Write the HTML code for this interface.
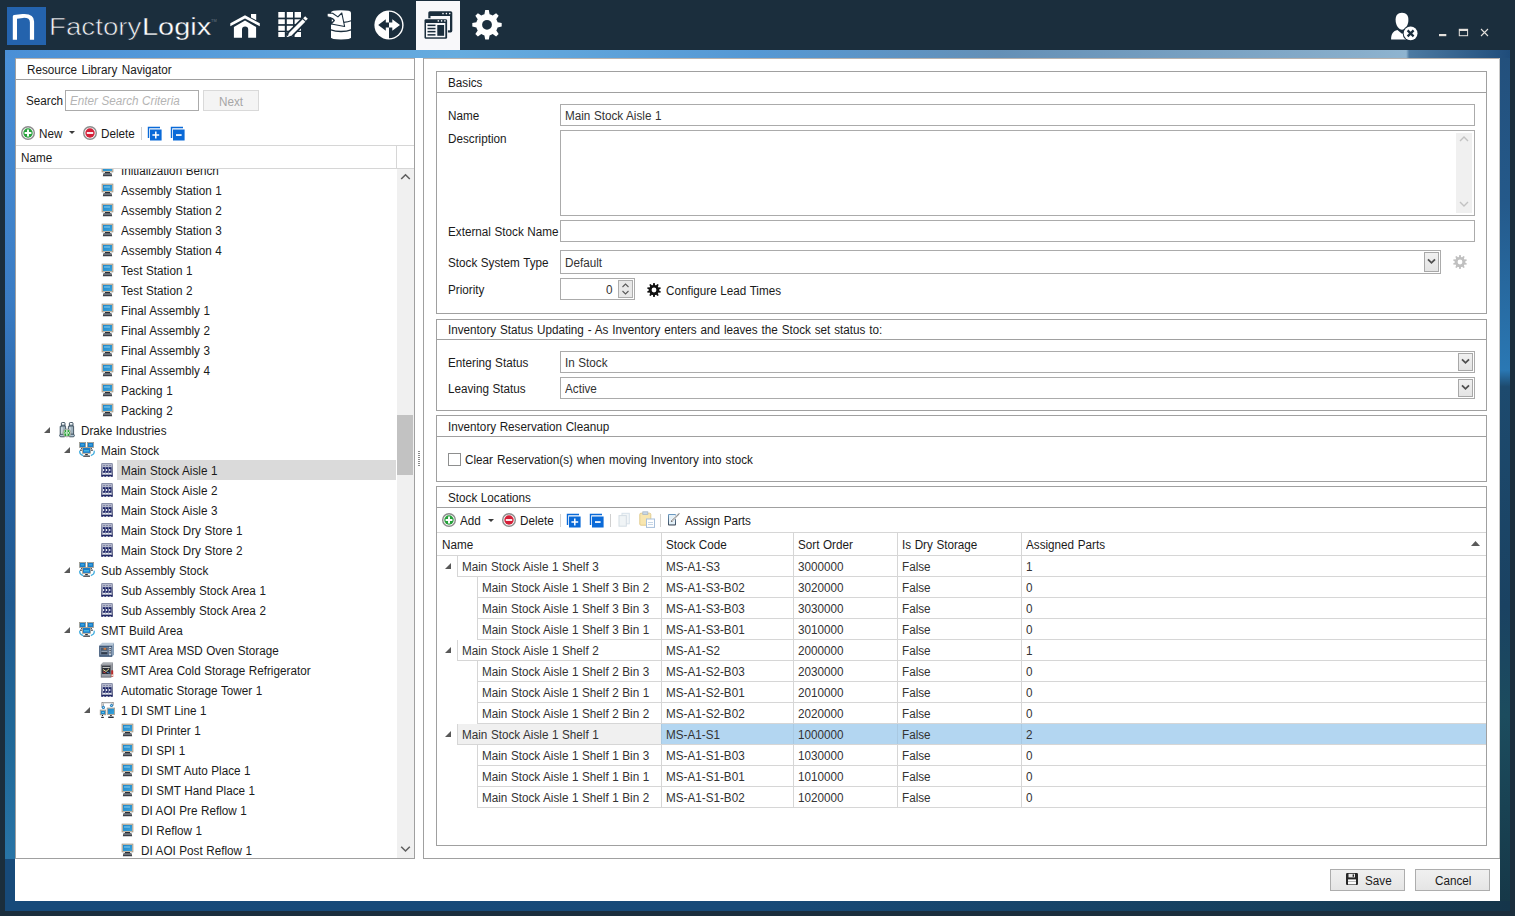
<!DOCTYPE html>
<html><head><meta charset="utf-8">
<style>
*{margin:0;padding:0;box-sizing:border-box}
html,body{width:1515px;height:916px;overflow:hidden;background:#1b2e3d;font-family:"Liberation Sans",sans-serif;font-size:11.7px;color:#1a1a1a}
.a{position:absolute}
.t{position:absolute;white-space:nowrap;line-height:14px;height:14px;word-spacing:0.3px;font-size:12px;transform:scaleX(0.975);transform-origin:0 0}
.hl{position:absolute;height:1px;background:#a0a0a0}
.vl{position:absolute;width:1px;background:#a0a0a0}
.box{position:absolute;border:1px solid #a0a0a0;background:#fff}
.gl{position:absolute;height:1px;background:#d6d6d6}
.gv{position:absolute;width:1px;background:#d6d6d6}
.v{color:#333}
</style></head><body>
<!-- frame -->
<div class="a" style="left:5px;top:50px;width:1505px;height:8px;background:linear-gradient(90deg,#4a8fd6 0%,#66acdf 30%,#5598d4 50%,#6590b6 66%,#88aecb 90%,#8fb4d0 93.1%,#4d7aa2 93.3%,#1f4c7a 100%)"></div>
<div class="a" style="left:5px;top:58px;width:10px;height:801px;background:linear-gradient(180deg,#4a90d8 0%,#3a7cc4 30%,#2460a2 50%,#1f5a90 68%,#1f6898 85%,#2874a6 100%)"></div>
<div class="a" style="left:5px;top:859px;width:10px;height:52px;background:#174a7a"></div>
<div class="a" style="left:1500px;top:58px;width:10px;height:843px;background:linear-gradient(180deg,#23507c 0%,#24598a 17%,#2a78b4 37%,#1d4a6e 39%,#1a4262 65%,#1c4c5e 78%,#163848 100%)"></div>
<div class="a" style="left:5px;top:901px;width:1505px;height:10px;background:linear-gradient(90deg,#174a7a 0%,#184a78 50%,#163f5c 85%,#15354a 100%)"></div>
<div class="a" style="left:15px;top:58px;width:1485px;height:843px;background:#fff"></div>
<div class="a" style="left:15px;top:58px;width:1485px;height:1px;background:#b8b2ae"></div>
<div class="a" style="left:415px;top:58px;width:8px;height:1px;background:#fff;z-index:1"></div>
<!-- title bar -->
<div id="title">
<div class="a" style="left:416px;top:1px;width:44px;height:49px;background:#f8f8fa"></div>
<svg class="a" style="left:0;top:0" width="1515" height="50" viewBox="0 0 1515 50">
 <!-- logo -->
 <rect x="7" y="7" width="39" height="38" fill="#2463ad"/>
 <path d="M12.8 39.7 V16.4 Q12.8 15.3 14 15.1 L22.5 14 Q34.1 13.2 34.1 21.5 V39.7 H29.9 V22.2 Q29.9 17.5 23 17.9 L17 18.7 V39.7 Z" fill="#fff"/>
 <!-- home -->
 <path d="M251 13.9 H256.2 V20.2 L251 17.4 Z" fill="#fff"/>
 <path d="M230.3 23.3 L245 15.2 L259.8 23.3 V26.3 L245 18.6 L230.3 26.3 Z" fill="#fff" stroke="#1b2e3d" stroke-width="0"/>
 <path d="M233.9 27 L245 20.6 L256.1 27 V37.8 H248.2 V29.6 A3.1 3.1 0 0 0 242 29.6 V37.8 H233.9 Z" fill="#fff"/>
 <!-- grid + pencil -->
 <g fill="#fff">
  <rect x="278.3" y="12" width="6.5" height="5.6"/><rect x="286.8" y="12" width="6.2" height="5.6"/><rect x="294.6" y="12" width="6.4" height="5.6"/>
  <rect x="278.3" y="19.3" width="6.5" height="4.8"/><rect x="286.8" y="19.3" width="6.2" height="4.8"/><rect x="294.6" y="19.3" width="6.4" height="4.8"/>
  <rect x="278.3" y="25.8" width="6.5" height="4.9"/><rect x="286.8" y="25.8" width="6.2" height="4.9"/><rect x="294.6" y="25.8" width="6.4" height="4.9"/>
  <rect x="278.3" y="32" width="6.5" height="5"/><rect x="286.8" y="32" width="6.2" height="5"/><rect x="294.6" y="32" width="6.4" height="5"/>
 </g>
 <path d="M288 36.5 L305.5 19" stroke="#1b2e3d" stroke-width="7"/>
 <path d="M290 34.5 L304 20.5" stroke="#fff" stroke-width="3.8"/>
 <path d="M287.6 37 L289 33 L291.5 35.5 Z" fill="#fff"/>
 <path d="M304.5 19.5 L306.5 17.5" stroke="#fff" stroke-width="3.8"/>
 <!-- database -->
 <path d="M331 12.6 Q331 10.3 341 10.3 Q351 10.3 351 12.6 V37.2 Q351 39.4 341 39.4 Q331 39.4 331 37.2 Z" fill="#fff"/>
 <path d="M330 29.6 Q341 33.4 352 29.6" fill="none" stroke="#1b2e3d" stroke-width="1.5"/>
 <path d="M343.5 22.4 Q348 22 352 20.5" fill="none" stroke="#1b2e3d" stroke-width="1.1"/>
 <path d="M330.4 16.4 L334 17.6 L335.2 20.4 L331.6 24.4 L330.4 24.4 Z" fill="#1b2e3d"/>
 <path d="M327.1 13.2 L332.6 13.2 L337.9 16.9 L341.8 13.0 L344.6 26.5 L331.3 24.0 L334.4 20.6 Q333.6 17.8 327.1 16.7 Z" fill="#fff" stroke="#1b2e3d" stroke-width="1.1" stroke-linejoin="round"/>
 <path d="M331.8 19 L333.4 20.5 L331.8 22" fill="#fff"/>
 <!-- transfer -->
 <circle cx="389" cy="25" r="14.6" fill="#fff"/>
 <path d="M389 11.8 A13.2 13.2 0 0 1 389 38.2 Z" fill="#1b2e3d"/>
 <path d="M378.2 25 L385.8 19.2 V22.6 H389 V27.4 H385.8 V30.8 Z" fill="#1b2e3d"/>
 <path d="M400 25 L392.3 19.2 V22.6 H389 V27.4 H392.3 V30.8 Z" fill="#fff"/>
 <!-- windows (active) -->
 <g fill="#1b2e3d">
  <rect x="428.3" y="11.2" width="24" height="21.2" rx="1.6"/>
 </g>
 <rect x="430.5" y="16" width="19.5" height="14.3" fill="#f8f8fa"/>
 <rect x="423.5" y="18.2" width="24.4" height="21.5" rx="1.6" fill="#f8f8fa"/>
 <rect x="424.5" y="19.2" width="22.6" height="19.6" rx="1.4" fill="#1b2e3d"/>
 <rect x="426" y="23" width="19.3" height="14.3" fill="#f8f8fa"/>
 <g fill="#1b2e3d">
  <rect x="427.5" y="24.6" width="8" height="1.5"/><rect x="427.5" y="27.8" width="8" height="1.5"/><rect x="427.5" y="30.9" width="8" height="1.5"/><rect x="427.5" y="34.1" width="8" height="1.5"/>
  <rect x="437.3" y="25" width="6.8" height="10.8"/>
 </g>
 <g fill="#f8f8fa"><circle cx="443" cy="13.6" r=".8"/><circle cx="446.4" cy="13.6" r=".8"/><circle cx="449.7" cy="13.6" r=".8"/>
 <circle cx="438.3" cy="20.9" r=".8"/><circle cx="441.6" cy="20.9" r=".8"/><circle cx="444.9" cy="20.9" r=".8"/></g>
 <!-- gear -->
 <g transform="translate(487,24.8)">
  <path id="gear8" fill="#fff" fill-rule="evenodd" d="M-2.58 -10.59 L-1.80 -14.69 L1.80 -14.69 L2.58 -10.59 A10.9 10.9 0 0 1 5.67 -9.31 L9.12 -11.66 L11.66 -9.12 L9.31 -5.67 A10.9 10.9 0 0 1 10.59 -2.58 L14.69 -1.80 L14.69 1.80 L10.59 2.58 A10.9 10.9 0 0 1 9.31 5.67 L11.66 9.12 L9.12 11.66 L5.67 9.31 A10.9 10.9 0 0 1 2.58 10.59 L1.80 14.69 L-1.80 14.69 L-2.58 10.59 A10.9 10.9 0 0 1 -5.67 9.31 L-9.12 11.66 L-11.66 9.12 L-9.31 5.67 A10.9 10.9 0 0 1 -10.59 2.58 L-14.69 1.80 L-14.69 -1.80 L-10.59 -2.58 A10.9 10.9 0 0 1 -9.31 -5.67 L-11.66 -9.12 L-9.12 -11.66 L-5.67 -9.31 A10.9 10.9 0 0 1 -2.58 -10.59 Z M0 -4.9 A4.9 4.9 0 1 0 0 4.9 A4.9 4.9 0 1 0 0 -4.9 Z"/>
 </g>
 <!-- user -->
 <path d="M1402 12.7 C1406.6 12.7 1408.4 15.6 1408.4 20 C1408.4 25.4 1405 29.8 1402 29.8 C1399 29.8 1395.6 25.4 1395.6 20 C1395.6 15.6 1397.4 12.7 1402 12.7 Z" fill="#fff"/>
 <path d="M1391.1 39.6 C1391.1 33.8 1393.2 31 1397.4 30 L1402 33.8 L1406 32 L1406 39.6 Z" fill="#fff"/>
 <circle cx="1410.6" cy="33.4" r="7.9" fill="#1b2e3d"/>
 <circle cx="1410.6" cy="33.4" r="6.9" fill="#fff"/>
 <path d="M1407.6 30.4 L1413.6 36.4 M1413.6 30.4 L1407.6 36.4" stroke="#1b2e3d" stroke-width="2.2"/>
 <!-- window controls -->
 <rect x="1439" y="34" width="7.3" height="2.2" fill="#e4e0dc"/>
 <rect x="1459.3" y="29.3" width="8.3" height="6.4" fill="none" stroke="#e4e0dc" stroke-width="1"/>
 <rect x="1459" y="29" width="9" height="2" fill="#e4e0dc"/>
 <path d="M1481 29 L1488 36 M1488 29 L1481 36" stroke="#e4e0dc" stroke-width="1.1"/>
</svg>
<div class="t" style="left:48.7px;top:10px;height:34px;line-height:34px;font-size:23.5px;color:#eef0f2;transform:scaleX(1.18);transform-origin:0 0;-webkit-text-stroke:0.6px #1b2e3d">Factory</div>
<div class="t" style="left:141.6px;top:10px;height:34px;line-height:34px;font-size:23.5px;color:#fff;transform:scaleX(1.23);transform-origin:0 0;-webkit-text-stroke:0.3px #1b2e3d">Logix</div>
<div class="t" style="left:211px;top:14px;font-size:4px;color:#6a7a86">TM</div>
</div>

<!-- left panel -->
<div id="left">
<svg width="0" height="0" style="position:absolute">
 <defs>
  <linearGradient id="g-scr" x1="0" y1="0" x2="1" y2="1"><stop offset="0" stop-color="#1f86c8"/><stop offset="1" stop-color="#3aa4dc"/></linearGradient>
  <linearGradient id="g-rack" x1="0" y1="0" x2="0" y2="1"><stop offset="0" stop-color="#8a90a8"/><stop offset="1" stop-color="#262c5c"/></linearGradient>
  <symbol id="i-pc" viewBox="0 0 16 16">
   <rect x="3" y="2" width="11" height="8" fill="#cbc2b2" stroke="#958c7c" stroke-width=".6"/>
   <rect x="4" y="3" width="9" height="6" fill="url(#g-scr)"/>
   <rect x="5" y="4" width="6" height="2" fill="#7cc4ea" opacity=".6"/>
   <rect x="6" y="10" width="5" height="1.2" fill="#2a2f38"/>
   <path d="M4.5 11.2 H12.5 L13.2 14.2 H3.8 Z" fill="#3c4048"/>
   <rect x="4.5" y="12.2" width="8" height=".8" fill="#7a7e86"/>
  </symbol>
  <symbol id="i-rack" viewBox="0 0 16 16">
   <rect x="2.2" y="1" width="11.6" height="13" rx=".9" fill="url(#g-rack)"/>
   <rect x="3.1" y="1.9" width="9.8" height="10.9" fill="#b4b8cc"/>
   <g fill="#6a7094"><rect x="4.2" y="3.2" width="1.8" height=".7"/><rect x="7" y="3.2" width="2" height=".7"/><rect x="10.1" y="3.2" width="1.9" height=".7"/></g>
   <g fill="#1c2466"><rect x="3.8" y="5.2" width="2.6" height="5.5"/><rect x="6.8" y="5.2" width="2.6" height="5.5"/><rect x="9.9" y="5.2" width="2.6" height="5.5"/></g>
   <g fill="#fff"><rect x="4.1" y="7" width="1.1" height="2.1"/><rect x="7.1" y="7" width="1.1" height="2.1"/><rect x="10.2" y="7" width="1.1" height="2.1"/></g>
   <g fill="#f0f2f8"><rect x="4.2" y="11.1" width="1.8" height=".9"/><rect x="7" y="11.1" width="2" height=".9"/><rect x="10.1" y="11.1" width="1.9" height=".9"/></g>
   <rect x="2.2" y="13.3" width="11.6" height="1.5" fill="#1c2466"/>
   <g fill="#fff"><rect x="4.2" y="14" width="1.1" height=".8"/><rect x="7.2" y="14" width="1.5" height=".8"/><rect x="10.6" y="14" width="1.1" height=".8"/></g>
</symbol>
  <symbol id="i-drake" viewBox="0 0 16 16">
   <g fill="#9fb2be" stroke="#3a4c5a" stroke-width=".9">
    <path d="M2.4 4.3 V1.2 Q2.4 0.5 3.4 0.5 H5 Q6 0.5 6 1.2 V4.3 H6.6 V12.4 H1.2 V4.3 Z"/>
    <path d="M10.4 4.3 V1.2 Q10.4 0.5 11.4 0.5 H13 Q14 0.5 14 1.2 V4.3 H14.6 V12.4 H9.4 V4.3 Z"/>
    <rect x="0.6" y="12.2" width="5.8" height="2.6" rx="1.3" fill="#b0c6d4"/>
    <rect x="9.6" y="12.2" width="5.8" height="2.6" rx="1.3" fill="#b0c6d4"/>
   </g>
   <g fill="#fff"><rect x="3" y="1.1" width="2.3" height="1.2"/><rect x="11" y="1.1" width="2.3" height="1.2"/></g>
   <g fill="#3a4c5a"><rect x="2.4" y="3.4" width="3.6" height="1"/><rect x="10.4" y="3.4" width="3.6" height="1"/></g>
   <g fill="#d4e0e8"><rect x="2.2" y="5.2" width="1.4" height="6.6"/><rect x="10.2" y="5.2" width="1.4" height="6.6"/></g>
   <circle cx="7.9" cy="10.9" r="4" fill="#e8e8e8" stroke="#8a8a8a" stroke-width=".7"/>
   <circle cx="7.9" cy="10.9" r="3.2" fill="#22a030"/>
   <path d="M7.9 8 V13.8" stroke="#fff" stroke-width="1.2"/>
   <path d="M5.2 9.6 L6.6 10.9 L5.2 12.2 M10.6 9.6 L9.2 10.9 L10.6 12.2" fill="none" stroke="#fff" stroke-width="1"/>
</symbol>
  <symbol id="i-net" viewBox="0 0 16 16">
   <path d="M0.9 8.6 Q-0.2 12 4.2 13.6 M15 8.6 Q16.2 12 11.8 13.6" fill="none" stroke="#48b0e0" stroke-width="1.3"/>
   <rect x="0.3" y="0.2" width="6.4" height="5.4" fill="#cbc2b2" stroke="#958c7c" stroke-width=".6"/><rect x="0.9" y="0.84" width="5.3" height="4.2" fill="#1a7cc8"/><rect x="2" y="2" width="3" height="1.6" fill="#40b4e8" opacity=".7"/>
   <rect x="8.3" y="0.2" width="6.4" height="5.4" fill="#cbc2b2" stroke="#958c7c" stroke-width=".6"/><rect x="8.9" y="0.84" width="5.3" height="4.2" fill="#1a7cc8"/><rect x="10" y="2" width="3" height="1.6" fill="#40b4e8" opacity=".7"/>
   <g fill="#2a2f38"><rect x="2" y="6" width="1" height=".8"/><rect x="12" y="6" width="1" height=".8"/><rect x="1" y="7.6" width="1.9" height="1.1"/><rect x="12" y="7.6" width="1.9" height="1.1"/></g>
   <rect x="3.3" y="5.3" width="8.3" height="6" fill="#cbc2b2" stroke="#958c7c" stroke-width=".6"/><rect x="4" y="6" width="7.1" height="4.9" fill="#1a7cc8"/><rect x="5" y="8" width="5" height="1.6" fill="#48c0ec" opacity=".8"/>
   <rect x="6.2" y="12" width="2.6" height="1.1" fill="#2a2f38"/><rect x="4.2" y="13.5" width="6.8" height="1.3" rx=".4" fill="#2a2f38"/>
</symbol>
  <symbol id="i-oven" viewBox="0 0 16 16">
   <path d="M0.2 3.6 L3.2 0.8 H15 L13 3.6 Z" fill="#b8c8d8"/>
   <path d="M13 3.6 L15 0.8 V12.4 L13 15 Z" fill="#8aa0b8"/>
   <rect x="0.2" y="3.6" width="12.8" height="11.2" fill="#2e4a6e"/>
   <rect x="1.2" y="4.8" width="8.2" height="8.6" fill="#7e90a6"/>
   <rect x="2" y="5.6" width="6.6" height="7" fill="#4a5a70"/>
   <rect x="4.6" y="6.1" width="2.6" height="1.6" fill="#d87a38"/>
   <rect x="2.4" y="8.8" width="5.8" height="1.1" fill="#9aa8b8"/>
   <rect x="2.4" y="10.6" width="5.8" height="1" fill="#222a36"/>
   <rect x="9.8" y="4.8" width="2.6" height="8.6" fill="#c8d2de"/>
   <g fill="#1a2230"><rect x="10.4" y="6.2" width="1.4" height="1"/><rect x="10.4" y="8.2" width="1.4" height="1"/><rect x="10.4" y="10.4" width="1.4" height="1"/></g>
</symbol>
  <symbol id="i-fridge" viewBox="0 0 16 16">
   <path d="M1.8 2.5 L4 0.3 H14 L12.3 2.5 Z" fill="#a8acb2"/>
   <path d="M12.3 2.5 L14 0.3 V13 L12.3 15.6 Z" fill="#8a8e96"/>
   <rect x="1.8" y="2.5" width="10.5" height="13.1" fill="#6a6e76"/>
   <rect x="2.6" y="3.4" width="9" height="11.2" fill="#9a9ea6"/>
   <rect x="3.1" y="3.8" width="8.3" height="8.2" fill="#2a2e36"/>
   <path d="M3.6 5.4 H10.8" stroke="#e8e8e8" stroke-width=".9"/>
   <path d="M4 7.5 L7 9.5 L10 6.8" stroke="#e8d890" stroke-width="1" fill="none"/>
   <path d="M4 9.8 L6.5 11" stroke="#d04040" stroke-width="1"/>
   <path d="M8 10.2 L10.5 11.2" stroke="#4a80c0" stroke-width="1"/>
   <rect x="12.2" y="8.2" width="2" height="6.8" rx=".6" fill="#b82a2a"/>
   <rect x="12.4" y="12.4" width="1.6" height="2" fill="#e8e0d0"/>
</symbol>
  <symbol id="i-line" viewBox="0 0 16 16">
   <path d="M3.6 5.4 V0.9 Q3.6 0.2 4.3 0.2 H12.9 Q13.6 0.2 13.6 0.9 V3.4" fill="none" stroke="#858585" stroke-width="2.2"/>
   <path d="M3.6 5.4 V1 H13.6 V3.4" fill="none" stroke="#f4f4f4" stroke-width=".7"/>
   <circle cx="4.4" cy="5.4" r="1.6" fill="#2a80c0"/><circle cx="4.4" cy="5.4" r=".6" fill="#a8e0f0"/>
   <circle cx="12.5" cy="3.5" r="1.6" fill="#2a80c0"/><circle cx="12.5" cy="3.5" r=".6" fill="#a8e0f0"/>
   <rect x="1.15" y="8" width="5.55" height="4.85" fill="#cbc2b2" stroke="#958c7c" stroke-width=".6"/><rect x="1.8" y="8.8" width="4.4" height="3.4" fill="#1f86c8"/><rect x="3" y="10" width="2" height="1" fill="#60c8ee"/>
   <rect x="8.1" y="6" width="7.7" height="6.6" fill="#cbc2b2" stroke="#958c7c" stroke-width=".6"/><rect x="8.9" y="6.7" width="6.2" height="5.3" fill="url(#g-scr)"/>
   <rect x="2.9" y="13" width="1.1" height="1" fill="#1a1e26"/><rect x="2.1" y="14.7" width="2.8" height="1.2" rx=".4" fill="#2a2f38"/>
   <rect x="11.2" y="13" width="1.5" height="1" fill="#1a1e26"/><rect x="9.1" y="14.6" width="5.7" height="1.3" rx=".4" fill="#2a2f38"/>
</symbol>
  <symbol id="i-add" viewBox="0 0 16 16">
   <circle cx="8" cy="8" r="6.3" fill="#fafafa" stroke="#8c8c8c" stroke-width="1.4"/>
   <circle cx="8" cy="8" r="4.7" fill="#26a03a"/>
   <path d="M8 4.6 V11.4 M4.6 8 H11.4" stroke="#fff" stroke-width="1.9"/>
</symbol>
  <symbol id="i-del" viewBox="0 0 16 16">
   <circle cx="8" cy="8" r="6.3" fill="#fafafa" stroke="#8c8c8c" stroke-width="1.4"/>
   <circle cx="8" cy="8" r="4.7" fill="#d42038"/>
   <rect x="4.8" y="7.1" width="6.4" height="1.8" fill="#fff"/>
</symbol>
  <symbol id="i-exp" viewBox="0 0 16 16">
   <path d="M1.5 12 V1.5 H13" fill="none" stroke="#0a6ad8" stroke-width="1.4"/>
   <rect x="3" y="3.5" width="11.6" height="11" fill="#0a6ad8"/>
   <path d="M8.8 5.6 V12.4 M5.4 9 H12.2" stroke="#fff" stroke-width="1.5"/>
  </symbol>
  <symbol id="i-col" viewBox="0 0 16 16">
   <path d="M1.5 12 V1.5 H13" fill="none" stroke="#0a6ad8" stroke-width="1.4"/>
   <rect x="3" y="3.5" width="11.6" height="11" fill="#0a6ad8"/>
   <rect x="6" y="8.2" width="5.6" height="1.7" fill="#fff"/>
  </symbol>
 </defs>
</svg>
<div class="vl" style="left:15px;top:58px;height:801px"></div>
<div class="vl" style="left:414px;top:58px;height:801px"></div>
<div class="hl" style="left:15px;top:858px;width:400px"></div>
<div class="hl" style="left:15px;top:79px;width:400px"></div>
<div class="t" style="left:27px;top:63px;word-spacing:1.2px">Resource Library Navigator</div>
<div class="t" style="left:26px;top:94px">Search</div>
<div class="box" style="left:65px;top:90px;width:134px;height:21px;border-color:#ababab"></div>
<div class="t" style="left:70px;top:94px;font-style:italic;color:#b4b4b4">Enter Search Criteria</div>
<div class="box" style="left:203px;top:90px;width:56px;height:21px;border-color:#d9d9d9;background:#f4f4f4"></div>
<div class="t" style="left:219px;top:95px;color:#a6a6a6">Next</div>
<svg class="a" style="left:20px;top:125px" width="16" height="16"><use href="#i-add"/></svg>
<div class="t" style="left:39px;top:127px">New</div>
<svg class="a" style="left:69px;top:131px" width="6" height="3"><path d="M0 0 H6 L3 3 Z" fill="#3a3a3a"/></svg>
<svg class="a" style="left:82px;top:125px" width="16" height="16"><use href="#i-del"/></svg>
<div class="t" style="left:101px;top:127px">Delete</div>
<div class="a" style="left:141px;top:127px;width:1px;height:13px;background:#d0d0d0"></div>
<svg class="a" style="left:147px;top:126px" width="16" height="16"><use href="#i-exp"/></svg>
<svg class="a" style="left:170px;top:126px" width="16" height="16"><use href="#i-col"/></svg>
<div class="gl" style="left:16px;top:145px;width:398px"></div>
<div class="gl" style="left:16px;top:168px;width:398px"></div>
<div class="gv" style="left:396px;top:146px;height:22px"></div>
<div class="t" style="left:21px;top:151px">Name</div>
<div class="a" style="left:397px;top:169px;width:17px;height:689px;background:#f0f0f0"></div>
<div class="a" style="left:397px;top:415px;width:16px;height:60px;background:#c2c2c2"></div>
<svg class="a" style="left:400px;top:173px" width="11" height="8"><path d="M1.2 6 L5.5 1.8 L9.8 6" fill="none" stroke="#606060" stroke-width="1.6"/></svg>
<svg class="a" style="left:400px;top:845px" width="11" height="8"><path d="M1.2 1.8 L5.5 6 L9.8 1.8" fill="none" stroke="#606060" stroke-width="1.6"/></svg>
<svg class="a" style="left:418px;top:451px" width="2" height="16"><g fill="#8a8a8a"><rect x="0" y="0" width="2" height="1"/><rect x="0" y="2" width="2" height="1"/><rect x="0" y="4" width="2" height="1"/><rect x="0" y="6" width="2" height="1"/><rect x="0" y="8" width="2" height="1"/><rect x="0" y="10" width="2" height="1"/><rect x="0" y="12" width="2" height="1"/><rect x="0" y="14" width="2" height="1"/></g></svg>
<div class="a" style="left:16px;top:169px;width:381px;height:689px;overflow:hidden">
<svg class="a ic" style="left:83px;top:-7px" width="16" height="16"><use href="#i-pc"/></svg>
<div class="t tt" style="left:105px;top:-5px">Initialization Bench</div>
<svg class="a ic" style="left:83px;top:13px" width="16" height="16"><use href="#i-pc"/></svg>
<div class="t tt" style="left:105px;top:15px">Assembly Station 1</div>
<svg class="a ic" style="left:83px;top:33px" width="16" height="16"><use href="#i-pc"/></svg>
<div class="t tt" style="left:105px;top:35px">Assembly Station 2</div>
<svg class="a ic" style="left:83px;top:53px" width="16" height="16"><use href="#i-pc"/></svg>
<div class="t tt" style="left:105px;top:55px">Assembly Station 3</div>
<svg class="a ic" style="left:83px;top:73px" width="16" height="16"><use href="#i-pc"/></svg>
<div class="t tt" style="left:105px;top:75px">Assembly Station 4</div>
<svg class="a ic" style="left:83px;top:93px" width="16" height="16"><use href="#i-pc"/></svg>
<div class="t tt" style="left:105px;top:95px">Test Station 1</div>
<svg class="a ic" style="left:83px;top:113px" width="16" height="16"><use href="#i-pc"/></svg>
<div class="t tt" style="left:105px;top:115px">Test Station 2</div>
<svg class="a ic" style="left:83px;top:133px" width="16" height="16"><use href="#i-pc"/></svg>
<div class="t tt" style="left:105px;top:135px">Final Assembly 1</div>
<svg class="a ic" style="left:83px;top:153px" width="16" height="16"><use href="#i-pc"/></svg>
<div class="t tt" style="left:105px;top:155px">Final Assembly 2</div>
<svg class="a ic" style="left:83px;top:173px" width="16" height="16"><use href="#i-pc"/></svg>
<div class="t tt" style="left:105px;top:175px">Final Assembly 3</div>
<svg class="a ic" style="left:83px;top:193px" width="16" height="16"><use href="#i-pc"/></svg>
<div class="t tt" style="left:105px;top:195px">Final Assembly 4</div>
<svg class="a ic" style="left:83px;top:213px" width="16" height="16"><use href="#i-pc"/></svg>
<div class="t tt" style="left:105px;top:215px">Packing 1</div>
<svg class="a ic" style="left:83px;top:233px" width="16" height="16"><use href="#i-pc"/></svg>
<div class="t tt" style="left:105px;top:235px">Packing 2</div>
<svg class="a" style="left:28px;top:258px" width="6" height="6"><path d="M6 0 V6 H0 Z" fill="#585858"/></svg>
<svg class="a ic" style="left:43px;top:253px" width="16" height="16"><use href="#i-drake"/></svg>
<div class="t tt" style="left:65px;top:255px">Drake Industries</div>
<svg class="a" style="left:48px;top:278px" width="6" height="6"><path d="M6 0 V6 H0 Z" fill="#585858"/></svg>
<svg class="a ic" style="left:63px;top:273px" width="16" height="16"><use href="#i-net"/></svg>
<div class="t tt" style="left:85px;top:275px">Main Stock</div>
<div class="a" style="left:101px;top:291px;width:279px;height:20px;background:#dadada"></div>
<svg class="a ic" style="left:83px;top:293px" width="16" height="16"><use href="#i-rack"/></svg>
<div class="t tt" style="left:105px;top:295px">Main Stock Aisle 1</div>
<svg class="a ic" style="left:83px;top:313px" width="16" height="16"><use href="#i-rack"/></svg>
<div class="t tt" style="left:105px;top:315px">Main Stock Aisle 2</div>
<svg class="a ic" style="left:83px;top:333px" width="16" height="16"><use href="#i-rack"/></svg>
<div class="t tt" style="left:105px;top:335px">Main Stock Aisle 3</div>
<svg class="a ic" style="left:83px;top:353px" width="16" height="16"><use href="#i-rack"/></svg>
<div class="t tt" style="left:105px;top:355px">Main Stock Dry Store 1</div>
<svg class="a ic" style="left:83px;top:373px" width="16" height="16"><use href="#i-rack"/></svg>
<div class="t tt" style="left:105px;top:375px">Main Stock Dry Store 2</div>
<svg class="a" style="left:48px;top:398px" width="6" height="6"><path d="M6 0 V6 H0 Z" fill="#585858"/></svg>
<svg class="a ic" style="left:63px;top:393px" width="16" height="16"><use href="#i-net"/></svg>
<div class="t tt" style="left:85px;top:395px">Sub Assembly Stock</div>
<svg class="a ic" style="left:83px;top:413px" width="16" height="16"><use href="#i-rack"/></svg>
<div class="t tt" style="left:105px;top:415px">Sub Assembly Stock Area 1</div>
<svg class="a ic" style="left:83px;top:433px" width="16" height="16"><use href="#i-rack"/></svg>
<div class="t tt" style="left:105px;top:435px">Sub Assembly Stock Area 2</div>
<svg class="a" style="left:48px;top:458px" width="6" height="6"><path d="M6 0 V6 H0 Z" fill="#585858"/></svg>
<svg class="a ic" style="left:63px;top:453px" width="16" height="16"><use href="#i-net"/></svg>
<div class="t tt" style="left:85px;top:455px">SMT Build Area</div>
<svg class="a ic" style="left:83px;top:473px" width="16" height="16"><use href="#i-oven"/></svg>
<div class="t tt" style="left:105px;top:475px">SMT Area MSD Oven Storage</div>
<svg class="a ic" style="left:83px;top:493px" width="16" height="16"><use href="#i-fridge"/></svg>
<div class="t tt" style="left:105px;top:495px">SMT Area Cold Storage Refrigerator</div>
<svg class="a ic" style="left:83px;top:513px" width="16" height="16"><use href="#i-rack"/></svg>
<div class="t tt" style="left:105px;top:515px">Automatic Storage Tower 1</div>
<svg class="a" style="left:68px;top:538px" width="6" height="6"><path d="M6 0 V6 H0 Z" fill="#585858"/></svg>
<svg class="a ic" style="left:83px;top:533px" width="16" height="16"><use href="#i-line"/></svg>
<div class="t tt" style="left:105px;top:535px">1 DI SMT Line 1</div>
<svg class="a ic" style="left:103px;top:553px" width="16" height="16"><use href="#i-pc"/></svg>
<div class="t tt" style="left:125px;top:555px">DI Printer 1</div>
<svg class="a ic" style="left:103px;top:573px" width="16" height="16"><use href="#i-pc"/></svg>
<div class="t tt" style="left:125px;top:575px">DI SPI 1</div>
<svg class="a ic" style="left:103px;top:593px" width="16" height="16"><use href="#i-pc"/></svg>
<div class="t tt" style="left:125px;top:595px">DI SMT Auto Place 1</div>
<svg class="a ic" style="left:103px;top:613px" width="16" height="16"><use href="#i-pc"/></svg>
<div class="t tt" style="left:125px;top:615px">DI SMT Hand Place 1</div>
<svg class="a ic" style="left:103px;top:633px" width="16" height="16"><use href="#i-pc"/></svg>
<div class="t tt" style="left:125px;top:635px">DI AOI Pre Reflow 1</div>
<svg class="a ic" style="left:103px;top:653px" width="16" height="16"><use href="#i-pc"/></svg>
<div class="t tt" style="left:125px;top:655px">DI Reflow 1</div>
<svg class="a ic" style="left:103px;top:673px" width="16" height="16"><use href="#i-pc"/></svg>
<div class="t tt" style="left:125px;top:675px">DI AOI Post Reflow 1</div>
</div>
</div>

<!-- right panel -->
<div id="right">
<svg width="0" height="0" style="position:absolute"><defs>
 <symbol id="i-gear" viewBox="-8 -8 16 16">
  <path fill-rule="evenodd" d="M-1.04 -5.09 L-0.75 -6.96 L0.75 -6.96 L1.04 -5.09 A5.2 5.2 0 0 1 2.15 -4.73 L3.49 -6.07 L4.70 -5.19 L3.84 -3.51 A5.2 5.2 0 0 1 4.52 -2.57 L6.39 -2.86 L6.85 -1.44 L5.17 -0.58 A5.2 5.2 0 0 1 5.17 0.58 L6.85 1.44 L6.39 2.86 L4.52 2.57 A5.2 5.2 0 0 1 3.84 3.51 L4.70 5.19 L3.49 6.07 L2.15 4.73 A5.2 5.2 0 0 1 1.04 5.09 L0.75 6.96 L-0.75 6.96 L-1.04 5.09 A5.2 5.2 0 0 1 -2.15 4.73 L-3.49 6.07 L-4.70 5.19 L-3.84 3.51 A5.2 5.2 0 0 1 -4.52 2.57 L-6.39 2.86 L-6.85 1.44 L-5.17 0.58 A5.2 5.2 0 0 1 -5.17 -0.58 L-6.85 -1.44 L-6.39 -2.86 L-4.52 -2.57 A5.2 5.2 0 0 1 -3.84 -3.51 L-4.70 -5.19 L-3.49 -6.07 L-2.15 -4.73 A5.2 5.2 0 0 1 -1.04 -5.09 Z M0 -2.4 A2.4 2.4 0 1 0 0 2.4 A2.4 2.4 0 1 0 0 -2.4 Z"/>
 </symbol>
 <linearGradient id="g-btn" x1="0" y1="0" x2="0" y2="1"><stop offset="0" stop-color="#f2f2f2"/><stop offset="1" stop-color="#e2e2e2"/></linearGradient>
</defs></svg>
<div class="vl" style="left:423px;top:58px;height:801px"></div>
<div class="vl" style="left:1499px;top:58px;height:801px;background:#c8c8c8"></div>
<div class="hl" style="left:423px;top:858px;width:1077px"></div>

<!-- Basics -->
<div class="box" style="left:436px;top:71px;width:1051px;height:243px"></div>
<div class="hl" style="left:436px;top:92px;width:1051px"></div>
<div class="t" style="left:448px;top:76px">Basics</div>
<div class="t" style="left:448px;top:109px">Name</div>
<div class="box" style="left:560px;top:104px;width:915px;height:22px;border-color:#ababab"></div>
<div class="t v" style="left:565px;top:109px">Main Stock Aisle 1</div>
<div class="t" style="left:448px;top:132px">Description</div>
<div class="box" style="left:560px;top:130px;width:915px;height:86px;border-color:#ababab"></div>
<div class="a" style="left:1456px;top:133px;width:16px;height:80px;background:#f0f0f0"></div>
<svg class="a" style="left:1459px;top:135px" width="10" height="8"><path d="M1 6 L5 2 L9 6" fill="none" stroke="#c2c2c2" stroke-width="1.4"/></svg>
<svg class="a" style="left:1459px;top:200px" width="10" height="8"><path d="M1 2 L5 6 L9 2" fill="none" stroke="#c2c2c2" stroke-width="1.4"/></svg>
<div class="t" style="left:448px;top:225px">External Stock Name</div>
<div class="box" style="left:560px;top:220px;width:915px;height:22px;border-color:#ababab"></div>
<div class="t" style="left:448px;top:256px">Stock System Type</div>
<div class="box" style="left:560px;top:250px;width:881px;height:24px;border-color:#ababab"></div>
<div class="a" style="left:1424px;top:252px;width:15px;height:20px;border:1px solid #a8a8a8;background:linear-gradient(#f0f0f0,#e4e4e4)"></div>
<svg class="a" style="left:1427px;top:258px" width="9" height="7"><path d="M1 1.3 L4.5 4.8 L8 1.3" fill="none" stroke="#505050" stroke-width="1.8"/></svg>
<div class="t v" style="left:565px;top:256px">Default</div>
<svg class="a" style="left:1452px;top:254px;fill:#c0c0c0" width="16" height="16"><use href="#i-gear"/></svg>
<div class="t" style="left:448px;top:283px">Priority</div>
<div class="box" style="left:560px;top:278px;width:75px;height:22px;border-color:#ababab"></div>
<div class="t v" style="left:606px;top:283px">0</div>
<div class="a" style="left:618px;top:280px;width:15px;height:18px;border:1px solid #adadad;background:#e8e8e8"></div>
<svg class="a" style="left:619px;top:281px" width="13" height="16"><path d="M3.5 6 L6.5 3 L9.5 6 M3.5 10 L6.5 13 L9.5 10" fill="none" stroke="#5a5a5a" stroke-width="1.1"/></svg>
<svg class="a" style="left:646px;top:282px;fill:#111" width="16" height="16"><use href="#i-gear"/></svg>
<div class="t" style="left:666px;top:284px">Configure Lead Times</div>

<!-- Inventory Status -->
<div class="box" style="left:436px;top:319px;width:1051px;height:92px"></div>
<div class="hl" style="left:436px;top:339px;width:1051px"></div>
<div class="t" style="left:448px;top:323px;word-spacing:0.6px">Inventory Status Updating - As Inventory enters and leaves the Stock set status to:</div>
<div class="t" style="left:448px;top:356px">Entering Status</div>
<div class="box" style="left:560px;top:351px;width:915px;height:22px;border-color:#ababab"></div>
<div class="a" style="left:1458px;top:353px;width:15px;height:18px;border:1px solid #a8a8a8;background:linear-gradient(#f0f0f0,#e4e4e4)"></div>
<svg class="a" style="left:1461px;top:358px" width="9" height="7"><path d="M1 1.3 L4.5 4.8 L8 1.3" fill="none" stroke="#505050" stroke-width="1.8"/></svg>
<div class="t v" style="left:565px;top:356px">In Stock</div>
<div class="t" style="left:448px;top:382px">Leaving Status</div>
<div class="box" style="left:560px;top:377px;width:915px;height:22px;border-color:#ababab"></div>
<div class="a" style="left:1458px;top:379px;width:15px;height:18px;border:1px solid #a8a8a8;background:linear-gradient(#f0f0f0,#e4e4e4)"></div>
<svg class="a" style="left:1461px;top:384px" width="9" height="7"><path d="M1 1.3 L4.5 4.8 L8 1.3" fill="none" stroke="#505050" stroke-width="1.8"/></svg>
<div class="t v" style="left:565px;top:382px">Active</div>

<!-- Reservation -->
<div class="box" style="left:436px;top:415px;width:1051px;height:67px"></div>
<div class="hl" style="left:436px;top:436px;width:1051px"></div>
<div class="t" style="left:448px;top:420px">Inventory Reservation Cleanup</div>
<div class="box" style="left:448px;top:453px;width:13px;height:13px;border-color:#8e8f8f"></div>
<div class="t" style="left:465px;top:453px;word-spacing:0.75px">Clear Reservation(s) when moving Inventory into stock</div>

<!-- Stock Locations -->
<div class="box" style="left:436px;top:486px;width:1051px;height:360px"></div>
<div class="hl" style="left:436px;top:507px;width:1051px"></div>
<div class="t" style="left:448px;top:491px">Stock Locations</div>
<svg class="a" style="left:441px;top:512px" width="16" height="16"><use href="#i-add"/></svg>
<div class="t" style="left:460px;top:514px">Add</div>
<svg class="a" style="left:488px;top:519px" width="6" height="3"><path d="M0 0 H6 L3 3 Z" fill="#3a3a3a"/></svg>
<svg class="a" style="left:501px;top:512px" width="16" height="16"><use href="#i-del"/></svg>
<div class="t" style="left:520px;top:514px">Delete</div>
<div class="a" style="left:560px;top:514px;width:1px;height:13px;background:#d0d0d0"></div>
<svg class="a" style="left:566px;top:513px" width="16" height="16"><use href="#i-exp"/></svg>
<svg class="a" style="left:589px;top:513px" width="16" height="16"><use href="#i-col"/></svg>
<div class="a" style="left:610px;top:514px;width:1px;height:13px;background:#d0d0d0"></div>
<svg class="a" style="left:617px;top:512px" width="16" height="16">
 <rect x="5" y="1.3" width="7.3" height="10.5" fill="#f2f6f8" stroke="#d8e2ea" stroke-width="1"/>
 <rect x="2" y="3.6" width="7.3" height="10.6" fill="#f0f4f6" stroke="#d4dde4" stroke-width="1"/>
</svg>
<svg class="a" style="left:639px;top:511px" width="17" height="17">
 <rect x="0.8" y="2.2" width="11" height="12" rx="1.2" fill="#f8e6b0" stroke="#e2cc90" stroke-width="1"/>
 <rect x="3.8" y="0.8" width="5" height="2.6" fill="#c8d8e8" stroke="#a8b8c8" stroke-width=".8"/>
 <rect x="7.5" y="8" width="8" height="8.4" fill="#fff" stroke="#a8c0dc" stroke-width="1"/>
 <path d="M9 11.5 H14 M9 13.5 H14" stroke="#b8cce0" stroke-width=".8"/>
</svg>
<div class="a" style="left:660px;top:514px;width:1px;height:13px;background:#d0d0d0"></div>
<svg class="a" style="left:667px;top:512px" width="14" height="15">
 <defs><linearGradient id="g-tab" x1="0" y1="0" x2="0" y2="1"><stop offset="0" stop-color="#6e9cc4"/><stop offset="1" stop-color="#3a4654"/></linearGradient></defs>
 <rect x="1" y="2" width="8" height="11.6" rx="1" fill="url(#g-tab)"/>
 <rect x="2" y="3" width="6" height="9.4" fill="#e4f0f8"/>
 <path d="M4.6 9.2 L12.4 1.4" stroke="#fff" stroke-width="2.6"/>
 <path d="M4.6 9.2 L12.4 1.4" stroke="#808080" stroke-width="1.6" stroke-dasharray="1 .5"/>
 <path d="M3.9 10 L4.4 8.4 L5.5 9.4 Z" fill="#505050"/>
</svg>
<div class="t" style="left:685px;top:514px">Assign Parts</div>

<!-- table -->
<div class="gl" style="left:437px;top:532px;width:1049px"></div>
<div class="gl" style="left:437px;top:555px;width:1049px"></div>
<div class="gv" style="left:661px;top:533px;height:22px"></div>
<div class="gv" style="left:793px;top:533px;height:22px"></div>
<div class="gv" style="left:897px;top:533px;height:22px"></div>
<div class="gv" style="left:1021px;top:533px;height:22px"></div>
<div class="t" style="left:442px;top:538px">Name</div>
<div class="t" style="left:666px;top:538px">Stock Code</div>
<div class="t" style="left:798px;top:538px">Sort Order</div>
<div class="t" style="left:902px;top:538px">Is Dry Storage</div>
<div class="t" style="left:1026px;top:538px">Assigned Parts</div>
<svg class="a" style="left:1470px;top:540px" width="11" height="7"><path d="M1 6 L5.5 1 L10 6 Z" fill="#5a5a5a"/></svg>
<div class="gv" style="left:457px;top:556px;height:21px"></div>
<div class="gv" style="left:661px;top:556px;height:21px;"></div>
<div class="gv" style="left:793px;top:556px;height:21px;"></div>
<div class="gv" style="left:897px;top:556px;height:21px;"></div>
<div class="gv" style="left:1021px;top:556px;height:21px;"></div>
<div class="gl" style="left:457px;top:576px;width:1029px"></div>
<svg class="a" style="left:445px;top:563px" width="6" height="6"><path d="M6 0 V6 H0 Z" fill="#585858"/></svg>
<div class="t v" style="left:462px;top:560px">Main Stock Aisle 1 Shelf 3</div>
<div class="t v" style="left:666px;top:560px">MS-A1-S3</div>
<div class="t v" style="left:798px;top:560px">3000000</div>
<div class="t v" style="left:902px;top:560px">False</div>
<div class="t v" style="left:1026px;top:560px">1</div>
<div class="gv" style="left:477px;top:577px;height:21px"></div>
<div class="gv" style="left:661px;top:577px;height:21px;"></div>
<div class="gv" style="left:793px;top:577px;height:21px;"></div>
<div class="gv" style="left:897px;top:577px;height:21px;"></div>
<div class="gv" style="left:1021px;top:577px;height:21px;"></div>
<div class="gl" style="left:477px;top:597px;width:1009px"></div>
<div class="t v" style="left:482px;top:581px">Main Stock Aisle 1 Shelf 3 Bin 2</div>
<div class="t v" style="left:666px;top:581px">MS-A1-S3-B02</div>
<div class="t v" style="left:798px;top:581px">3020000</div>
<div class="t v" style="left:902px;top:581px">False</div>
<div class="t v" style="left:1026px;top:581px">0</div>
<div class="gv" style="left:477px;top:598px;height:21px"></div>
<div class="gv" style="left:661px;top:598px;height:21px;"></div>
<div class="gv" style="left:793px;top:598px;height:21px;"></div>
<div class="gv" style="left:897px;top:598px;height:21px;"></div>
<div class="gv" style="left:1021px;top:598px;height:21px;"></div>
<div class="gl" style="left:477px;top:618px;width:1009px"></div>
<div class="t v" style="left:482px;top:602px">Main Stock Aisle 1 Shelf 3 Bin 3</div>
<div class="t v" style="left:666px;top:602px">MS-A1-S3-B03</div>
<div class="t v" style="left:798px;top:602px">3030000</div>
<div class="t v" style="left:902px;top:602px">False</div>
<div class="t v" style="left:1026px;top:602px">0</div>
<div class="gv" style="left:477px;top:619px;height:21px"></div>
<div class="gv" style="left:661px;top:619px;height:21px;"></div>
<div class="gv" style="left:793px;top:619px;height:21px;"></div>
<div class="gv" style="left:897px;top:619px;height:21px;"></div>
<div class="gv" style="left:1021px;top:619px;height:21px;"></div>
<div class="gl" style="left:477px;top:639px;width:1009px"></div>
<div class="t v" style="left:482px;top:623px">Main Stock Aisle 1 Shelf 3 Bin 1</div>
<div class="t v" style="left:666px;top:623px">MS-A1-S3-B01</div>
<div class="t v" style="left:798px;top:623px">3010000</div>
<div class="t v" style="left:902px;top:623px">False</div>
<div class="t v" style="left:1026px;top:623px">0</div>
<div class="gv" style="left:457px;top:640px;height:21px"></div>
<div class="gv" style="left:661px;top:640px;height:21px;"></div>
<div class="gv" style="left:793px;top:640px;height:21px;"></div>
<div class="gv" style="left:897px;top:640px;height:21px;"></div>
<div class="gv" style="left:1021px;top:640px;height:21px;"></div>
<div class="gl" style="left:457px;top:660px;width:1029px"></div>
<svg class="a" style="left:445px;top:647px" width="6" height="6"><path d="M6 0 V6 H0 Z" fill="#585858"/></svg>
<div class="t v" style="left:462px;top:644px">Main Stock Aisle 1 Shelf 2</div>
<div class="t v" style="left:666px;top:644px">MS-A1-S2</div>
<div class="t v" style="left:798px;top:644px">2000000</div>
<div class="t v" style="left:902px;top:644px">False</div>
<div class="t v" style="left:1026px;top:644px">1</div>
<div class="gv" style="left:477px;top:661px;height:21px"></div>
<div class="gv" style="left:661px;top:661px;height:21px;"></div>
<div class="gv" style="left:793px;top:661px;height:21px;"></div>
<div class="gv" style="left:897px;top:661px;height:21px;"></div>
<div class="gv" style="left:1021px;top:661px;height:21px;"></div>
<div class="gl" style="left:477px;top:681px;width:1009px"></div>
<div class="t v" style="left:482px;top:665px">Main Stock Aisle 1 Shelf 2 Bin 3</div>
<div class="t v" style="left:666px;top:665px">MS-A1-S2-B03</div>
<div class="t v" style="left:798px;top:665px">2030000</div>
<div class="t v" style="left:902px;top:665px">False</div>
<div class="t v" style="left:1026px;top:665px">0</div>
<div class="gv" style="left:477px;top:682px;height:21px"></div>
<div class="gv" style="left:661px;top:682px;height:21px;"></div>
<div class="gv" style="left:793px;top:682px;height:21px;"></div>
<div class="gv" style="left:897px;top:682px;height:21px;"></div>
<div class="gv" style="left:1021px;top:682px;height:21px;"></div>
<div class="gl" style="left:477px;top:702px;width:1009px"></div>
<div class="t v" style="left:482px;top:686px">Main Stock Aisle 1 Shelf 2 Bin 1</div>
<div class="t v" style="left:666px;top:686px">MS-A1-S2-B01</div>
<div class="t v" style="left:798px;top:686px">2010000</div>
<div class="t v" style="left:902px;top:686px">False</div>
<div class="t v" style="left:1026px;top:686px">0</div>
<div class="gv" style="left:477px;top:703px;height:21px"></div>
<div class="gv" style="left:661px;top:703px;height:21px;"></div>
<div class="gv" style="left:793px;top:703px;height:21px;"></div>
<div class="gv" style="left:897px;top:703px;height:21px;"></div>
<div class="gv" style="left:1021px;top:703px;height:21px;"></div>
<div class="gl" style="left:477px;top:723px;width:1009px"></div>
<div class="t v" style="left:482px;top:707px">Main Stock Aisle 1 Shelf 2 Bin 2</div>
<div class="t v" style="left:666px;top:707px">MS-A1-S2-B02</div>
<div class="t v" style="left:798px;top:707px">2020000</div>
<div class="t v" style="left:902px;top:707px">False</div>
<div class="t v" style="left:1026px;top:707px">0</div>
<div class="a" style="left:458px;top:724px;width:203px;height:20px;background:#f0f0f0"></div>
<div class="a" style="left:662px;top:724px;width:824px;height:21px;background:#b3d6f1"></div>
<div class="gv" style="left:457px;top:724px;height:21px"></div>
<div class="gv" style="left:661px;top:724px;height:20px;background:#a9c9e2;"></div>
<div class="gv" style="left:793px;top:724px;height:20px;background:#a9c9e2;"></div>
<div class="gv" style="left:897px;top:724px;height:20px;background:#a9c9e2;"></div>
<div class="gv" style="left:1021px;top:724px;height:20px;background:#a9c9e2;"></div>
<div class="gl" style="left:457px;top:744px;width:1029px"></div>
<svg class="a" style="left:445px;top:731px" width="6" height="6"><path d="M6 0 V6 H0 Z" fill="#585858"/></svg>
<div class="t v" style="left:462px;top:728px">Main Stock Aisle 1 Shelf 1</div>
<div class="t v" style="left:666px;top:728px">MS-A1-S1</div>
<div class="t v" style="left:798px;top:728px">1000000</div>
<div class="t v" style="left:902px;top:728px">False</div>
<div class="t v" style="left:1026px;top:728px">2</div>
<div class="gv" style="left:477px;top:745px;height:21px"></div>
<div class="gv" style="left:661px;top:745px;height:21px;"></div>
<div class="gv" style="left:793px;top:745px;height:21px;"></div>
<div class="gv" style="left:897px;top:745px;height:21px;"></div>
<div class="gv" style="left:1021px;top:745px;height:21px;"></div>
<div class="gl" style="left:477px;top:765px;width:1009px"></div>
<div class="t v" style="left:482px;top:749px">Main Stock Aisle 1 Shelf 1 Bin 3</div>
<div class="t v" style="left:666px;top:749px">MS-A1-S1-B03</div>
<div class="t v" style="left:798px;top:749px">1030000</div>
<div class="t v" style="left:902px;top:749px">False</div>
<div class="t v" style="left:1026px;top:749px">0</div>
<div class="gv" style="left:477px;top:766px;height:21px"></div>
<div class="gv" style="left:661px;top:766px;height:21px;"></div>
<div class="gv" style="left:793px;top:766px;height:21px;"></div>
<div class="gv" style="left:897px;top:766px;height:21px;"></div>
<div class="gv" style="left:1021px;top:766px;height:21px;"></div>
<div class="gl" style="left:477px;top:786px;width:1009px"></div>
<div class="t v" style="left:482px;top:770px">Main Stock Aisle 1 Shelf 1 Bin 1</div>
<div class="t v" style="left:666px;top:770px">MS-A1-S1-B01</div>
<div class="t v" style="left:798px;top:770px">1010000</div>
<div class="t v" style="left:902px;top:770px">False</div>
<div class="t v" style="left:1026px;top:770px">0</div>
<div class="gv" style="left:477px;top:787px;height:21px"></div>
<div class="gv" style="left:661px;top:787px;height:21px;"></div>
<div class="gv" style="left:793px;top:787px;height:21px;"></div>
<div class="gv" style="left:897px;top:787px;height:21px;"></div>
<div class="gv" style="left:1021px;top:787px;height:21px;"></div>
<div class="gl" style="left:477px;top:807px;width:1009px"></div>
<div class="t v" style="left:482px;top:791px">Main Stock Aisle 1 Shelf 1 Bin 2</div>
<div class="t v" style="left:666px;top:791px">MS-A1-S1-B02</div>
<div class="t v" style="left:798px;top:791px">1020000</div>
<div class="t v" style="left:902px;top:791px">False</div>
<div class="t v" style="left:1026px;top:791px">0</div>
<!-- buttons -->
<div class="a" style="left:1330px;top:869px;width:75px;height:22px;border:1px solid #adadad;background:linear-gradient(#f0f0f0,#e5e5e5)"></div>
<svg class="a" style="left:1346px;top:873px" width="12" height="12">
 <rect x="0" y="0" width="12" height="12" rx="1.2" fill="#262626"/>
 <rect x="2.5" y="0.8" width="6.5" height="3.6" fill="#e8e8e8"/>
 <rect x="6.6" y="1.4" width="1.4" height="2.4" fill="#262626"/>
 <rect x="2" y="6.4" width="8" height="5" fill="#fafafa"/>
 <rect x="2" y="8.2" width="8" height=".7" fill="#9a9a9a"/>
</svg>
<div class="t" style="left:1365px;top:874px">Save</div>
<div class="a" style="left:1415px;top:869px;width:75px;height:22px;border:1px solid #adadad;background:linear-gradient(#f0f0f0,#e5e5e5)"></div>
<div class="t" style="left:1435px;top:874px">Cancel</div>
</div>


</body></html>
